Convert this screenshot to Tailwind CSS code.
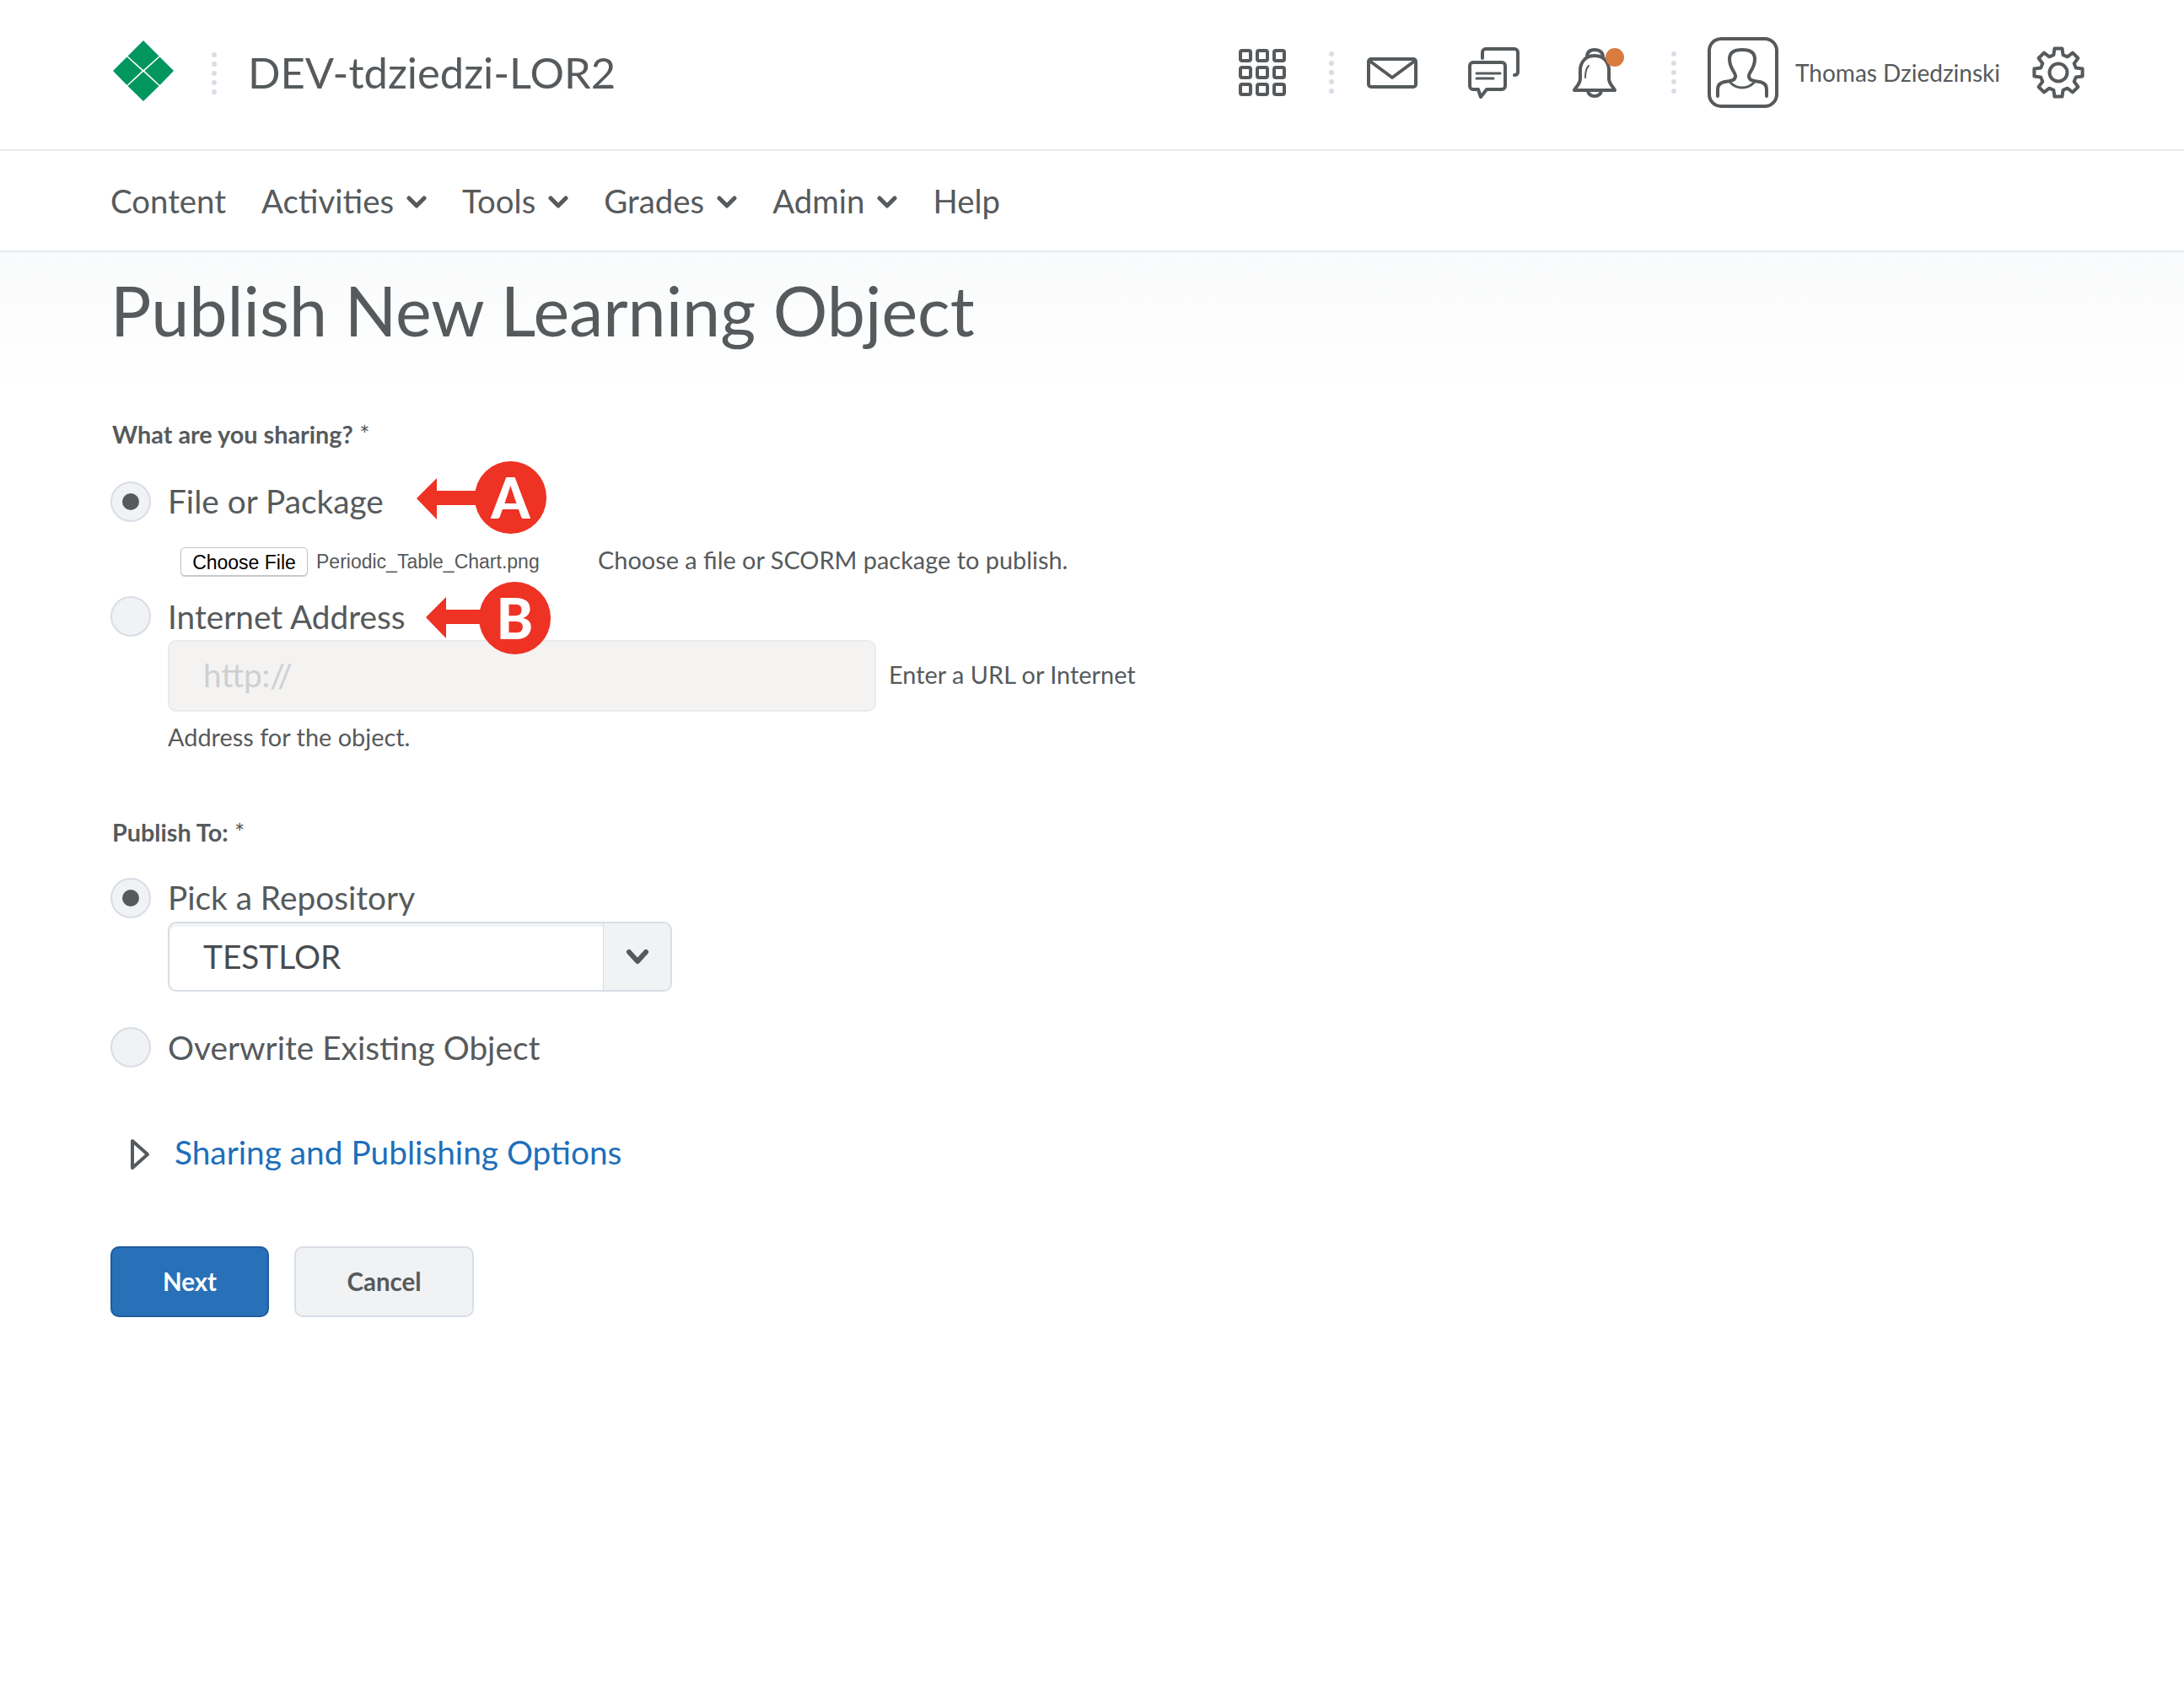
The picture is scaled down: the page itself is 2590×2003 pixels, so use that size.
<!DOCTYPE html>
<html lang="en">
<head>
    <meta charset="UTF-8">
    <title>Publish New Learning Object</title>
    <script src="https://cdn.jsdelivr.net/npm/@tailwindcss/browser@4"></script>
</head>
<body class="bg-white font-['Lato',sans-serif] text-[#565a5c] relative">
    <!-- top bar -->
    <header class="h-[179px] border-b-2 border-[#e6eaf0] px-[134px] flex items-center">
        <svg width="72" height="72" viewBox="0 0 72 72" class="shrink-0 mt-[-10px]">
            <path fill="#00965e" d="M36 0 54.500 18.500 36 35 17.500 18.500Z M16.500 19.500 34.500 36 16.500 53 0 36Z M55.500 19.500 72 36 55.500 53 37.500 36Z M36 37 54.500 54 36 72 17.500 54Z"/>
        </svg>
        <div class="flex flex-col gap-[5px] ml-[45px] mt-[-3px]">
            <span class="w-[6px] h-[6px] rounded-full bg-[#d8dde6]"></span><span class="w-[6px] h-[6px] rounded-full bg-[#d8dde6]"></span><span class="w-[6px] h-[6px] rounded-full bg-[#d8dde6]"></span><span class="w-[6px] h-[6px] rounded-full bg-[#d8dde6]"></span><span class="w-[6px] h-[6px] rounded-full bg-[#d8dde6]"></span>
        </div>
        <div class="ml-[37px] text-[50.700px] leading-none mt-[-4px]">DEV-tdziedzi-LOR2</div>
        <div class="ml-auto flex items-center mr-[-16px] mt-[-5px]">
            <svg width="56" height="56" viewBox="0 0 56 56" fill="none" stroke="#565a5c" stroke-width="4">
                <rect x="2" y="2" width="12" height="12" rx="2"/><rect x="22" y="2" width="12" height="12" rx="2"/><rect x="42" y="2" width="12" height="12" rx="2"/>
                <rect x="2" y="22" width="12" height="12" rx="2"/><rect x="22" y="22" width="12" height="12" rx="2"/><rect x="42" y="22" width="12" height="12" rx="2"/>
                <rect x="2" y="42" width="12" height="12" rx="2"/><rect x="22" y="42" width="12" height="12" rx="2"/><rect x="42" y="42" width="12" height="12" rx="2"/>
            </svg>
            <div class="flex flex-col gap-[5px] ml-[51px]">
                <span class="w-[6px] h-[6px] rounded-full bg-[#d8dde6]"></span><span class="w-[6px] h-[6px] rounded-full bg-[#d8dde6]"></span><span class="w-[6px] h-[6px] rounded-full bg-[#d8dde6]"></span><span class="w-[6px] h-[6px] rounded-full bg-[#d8dde6]"></span><span class="w-[6px] h-[6px] rounded-full bg-[#d8dde6]"></span>
            </div>
            <svg width="60" height="37" viewBox="0 0 60 37" fill="none" stroke="#565a5c" stroke-width="4" stroke-linejoin="round" class="ml-[39px]">
                <rect x="2" y="2" width="56" height="33" rx="3"/><path d="M3 4 30 24 57 4"/>
            </svg>
            <svg width="61" height="61" viewBox="0 0 61 61" fill="none" stroke="#565a5c" stroke-width="4" stroke-linejoin="round" stroke-linecap="round" class="ml-[60px]">
                <path d="M17 13V6a4 4 0 0 1 4-4h34a4 4 0 0 1 4 4v24a4 4 0 0 1-4 3"/>
                <path d="M6 18h34a4 4 0 0 1 4 4v24a4 4 0 0 1-4 4H22l-7 9-3-9H6a4 4 0 0 1-4-4V22a4 4 0 0 1 4-4Z"/>
                <path d="M10 31H38M10 37H30" stroke-width="3"/>
            </svg>
            <div class="relative ml-[63px] w-[53px] h-[61px]">
                <svg width="53" height="61" viewBox="0 0 53 61" fill="none" stroke="#565a5c" stroke-width="4" stroke-linejoin="round" stroke-linecap="round">
                    <path d="M17 12C17 6 20 3 26 3S36 6 36 12"/>
                    <path d="M2 51c1-3 7-7 7-14 0-9-1-14 3-20 3-5 8-7 14-7s11 2 14 7c4 6 3 11 3 20 0 7 6 11 7 14Z"/>
                    <path d="M18 52c1 4 4 6 8 6s7-2 8-6"/>
                    <path d="M15 36c0-6 1-11 4-14" stroke-width="2"/>
                </svg>
                <span class="absolute left-[39px] top-[1px] w-[22px] h-[22px] rounded-full bg-[#d97b3f]"></span>
            </div>
            <div class="flex flex-col gap-[5px] ml-[64px]">
                <span class="w-[6px] h-[6px] rounded-full bg-[#d8dde6]"></span><span class="w-[6px] h-[6px] rounded-full bg-[#d8dde6]"></span><span class="w-[6px] h-[6px] rounded-full bg-[#d8dde6]"></span><span class="w-[6px] h-[6px] rounded-full bg-[#d8dde6]"></span><span class="w-[6px] h-[6px] rounded-full bg-[#d8dde6]"></span>
            </div>
            <svg width="84" height="84" viewBox="0 0 84 84" fill="none" stroke="#565a5c" stroke-width="4" stroke-linecap="round" stroke-linejoin="round" class="ml-[37px]">
                <rect x="2" y="2" width="80" height="80" rx="14"/>
                <path d="M12 70v-8c0-5 3-8 8-9 7-1 12-1 13-6 1-5-7-9-7-21 0-8 6-11 15-11M70 70v-8c0-5-3-8-8-9-7-1-12-1-13-6-1-5 7-9 7-21 0-8-6-11-15-11"/>
                <path d="M27 54c4 4 8 6 14 6s10-2 14-6" stroke-width="3"/>
            </svg>
            <span class="ml-[20px] text-[28px] leading-none">Thomas Dziedzinski</span>
            <svg width="62" height="62" viewBox="-31 -31 62 62" fill="none" stroke="#565a5c" stroke-width="4" stroke-linejoin="round" class="ml-[38px]">
                <path d="M-5.600 -20.800-4.500 -28.600H4.500L5.600 -20.800 10.700 -18.700 17 -23.400 23.400 -17 18.700 -10.700 20.800 -5.600 28.600 -4.500V4.500L20.800 5.600 18.700 10.700 23.400 17 17 23.400 10.700 18.700 5.600 20.800 4.500 28.600H-4.500L-5.600 20.800-10.700 18.700-17 23.400-23.400 17-18.700 10.700-20.800 5.600-28.600 4.500V-4.500L-20.800 -5.600-18.700 -10.700-23.400 -17-17 -23.400-10.700 -18.700Z"/>
                <circle r="10.500"/>
            </svg>
        </div>
    </header>
    <!-- nav -->
    <nav class="h-[120px] border-b-2 border-[#e6eaf0] px-[131px] pt-[2px] flex items-center text-[38.400px] gap-[42px]">
        <a>Content</a>
        <a class="flex items-center gap-[15px]">Activities <svg width="24" height="16" viewBox="0 0 24 16" fill="none" stroke="#565a5c" stroke-width="5" stroke-linecap="round" stroke-linejoin="round" class="mt-[2px]"><path d="M3 3 12 12 21 3"/></svg></a>
        <a class="flex items-center gap-[15px]">Tools <svg width="24" height="16" viewBox="0 0 24 16" fill="none" stroke="#565a5c" stroke-width="5" stroke-linecap="round" stroke-linejoin="round" class="mt-[2px]"><path d="M3 3 12 12 21 3"/></svg></a>
        <a class="flex items-center gap-[15px]">Grades <svg width="24" height="16" viewBox="0 0 24 16" fill="none" stroke="#565a5c" stroke-width="5" stroke-linecap="round" stroke-linejoin="round" class="mt-[2px]"><path d="M3 3 12 12 21 3"/></svg></a>
        <a class="flex items-center gap-[15px]">Admin <svg width="24" height="16" viewBox="0 0 24 16" fill="none" stroke="#565a5c" stroke-width="5" stroke-linecap="round" stroke-linejoin="round" class="mt-[2px]"><path d="M3 3 12 12 21 3"/></svg></a>
        <a>Help</a>
    </nav>
    <!-- form -->
    <main class="px-[131px] pt-[19px] h-[1704px] bg-linear-to-b from-[#f9fafb] to-white to-[160px]">
        <h1 class="text-[80.800px] leading-[100px]">Publish New Learning Object</h1>
        <div class="mt-[77px] ml-[2px] text-[28.800px] leading-[40px]"><b>What are you sharing?</b> *</div>
        <div class="mt-[36px] flex items-center h-[48px]">
            <span class="w-[48px] h-[48px] rounded-full border-2 border-[#d8dde6] bg-[#f1f2f4] flex items-center justify-center"><span class="w-[20px] h-[20px] rounded-full bg-[#565a5c]"></span></span>
            <span class="ml-[20px] text-[38.800px] mt-[-2px]">File or Package</span>
        </div>
        <div class="mt-[30px] ml-[83px] flex items-center h-[34px]">
            <button class="w-[151px] h-[34px] bg-white border border-[#c4c4c4] rounded-[5px] shadow-[0_1px_1px_#ccc] text-black text-[23px] font-['Liberation_Sans',sans-serif]">Choose File</button>
            <span class="ml-[10px] text-[23px] font-['Liberation_Sans',sans-serif] w-[334px]">Periodic_Table_Chart.png</span>
            <span class="text-[28.900px] mt-[-4px]">Choose a file or SCORM package to publish.</span>
        </div>
        <div class="mt-[24px] flex items-center h-[48px]">
            <span class="w-[48px] h-[48px] rounded-full border-2 border-[#d8dde6] bg-[#f1f2f4]"></span>
            <span class="ml-[20px] text-[38.800px]">Internet Address</span>
        </div>
        <div class="mt-[4px] ml-[68px] flex items-center">
            <div class="w-[840px] h-[85px] rounded-[10px] border-2 border-[#e9ebee] bg-[#f4f3f2] pl-[40px] pb-[2px] flex items-center text-[38.800px] text-[#cdd0d3]">http://</div>
            <span class="ml-[15px] text-[28.900px] mt-[-3px]">Enter a URL or Internet</span>
        </div>
        <div class="mt-[10px] ml-[68px] text-[28.900px] leading-[40px]">Address for the object.</div>
        <div class="mt-[73px] ml-[2px] text-[28.800px] leading-[40px]"><b>Publish To:</b> *</div>
        <div class="mt-[34px] flex items-center h-[48px]">
            <span class="w-[48px] h-[48px] rounded-full border-2 border-[#d8dde6] bg-[#f1f2f4] flex items-center justify-center"><span class="w-[20px] h-[20px] rounded-full bg-[#565a5c]"></span></span>
            <span class="ml-[20px] text-[38.800px] mt-[-2px]">Pick a Repository</span>
        </div>
        <div class="mt-[4px] ml-[68px] w-[598px] h-[83px] rounded-[10px] border-2 border-[#d8dde6] shadow-[inset_0_4px_0_#f1f2f4] flex items-center overflow-hidden">
            <span class="flex-1 pl-[40px] text-[38.800px] text-[#494c4e]">TESTLOR</span>
            <span class="w-[80px] h-full bg-[#f1f2f4] border-l border-[#d8dde6] flex items-center justify-center"><svg width="28" height="20" viewBox="0 0 28 20" fill="none" stroke="#565a5c" stroke-width="6" stroke-linecap="round" stroke-linejoin="round"><path d="M4 4 14 15 24 4"/></svg></span>
        </div>
        <div class="mt-[42px] flex items-center h-[48px]">
            <span class="w-[48px] h-[48px] rounded-full border-2 border-[#d8dde6] bg-[#f1f2f4]"></span>
            <span class="ml-[20px] text-[38.800px]">Overwrite Existing Object</span>
        </div>
        <div class="mt-[80px] flex items-center h-[40px]">
            <svg width="22" height="36" viewBox="0 0 22 36" fill="none" stroke="#565a5c" stroke-width="4" stroke-linejoin="round" class="ml-[24px] mt-[5px]"><path d="M2 2 20 18 2 34Z"/></svg>
            <a class="ml-[30px] text-[38.800px] text-[#1e6fba]">Sharing and Publishing Options</a>
        </div>
        <div class="mt-[92px] flex gap-[30px]">
            <button class="w-[188px] h-[84px] rounded-[10px] bg-[#2870b8] border-2 border-[#1f5d9c] text-white text-[29.500px] font-bold">Next</button>
            <button class="w-[213px] h-[84px] rounded-[10px] bg-[#f1f2f4] border-2 border-[#d8dde6] text-[29.500px] font-bold">Cancel</button>
        </div>
    </main>
    <!-- callouts -->
    <div class="absolute left-[494px] top-[547px] w-[155px] h-[86px]">
        <svg width="90" height="50" viewBox="0 0 90 50" class="absolute left-0 top-[20px]"><path fill="#ee3224" d="M0 24 24 0V15H90V32H24V49Z"/></svg>
        <div class="absolute left-[69px] top-0 w-[85px] h-[86px] rounded-full bg-[#ee3224] flex items-center justify-center text-white font-black text-[66px] leading-none">A</div>
    </div>
    <div class="absolute left-[505px] top-[690px] w-[155px] h-[86px]">
        <svg width="90" height="50" viewBox="0 0 90 50" class="absolute left-0 top-[18px]"><path fill="#ee3224" d="M0 24 24 0V15H90V32H24V49Z"/></svg>
        <div class="absolute left-[63px] top-0 w-[85px] h-[86px] rounded-full bg-[#ee3224] flex items-center justify-center text-white font-black text-[66px] leading-none">B</div>
    </div>
</body>
</html>
